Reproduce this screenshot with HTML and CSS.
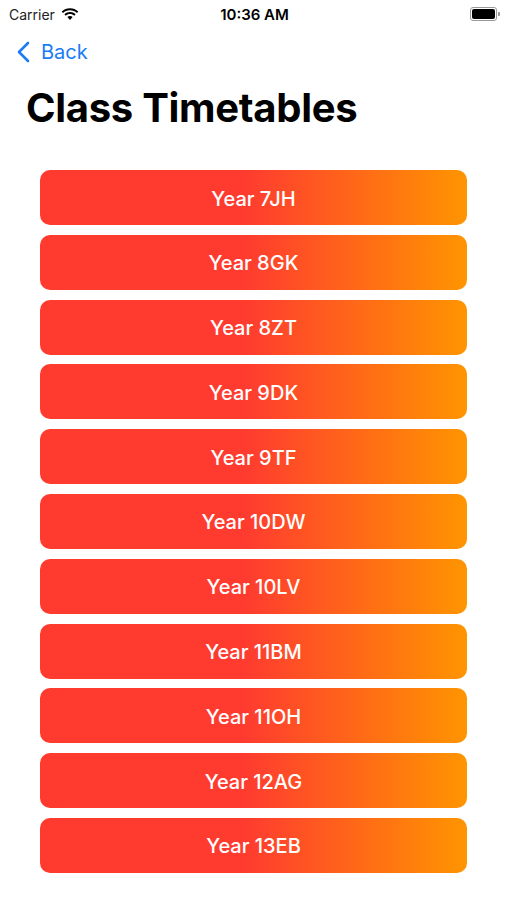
FILE: index.html
```html
<!DOCTYPE html>
<html lang="en">
<head>
    <meta charset="UTF-8">
    <meta name="viewport" content="width=device-width, initial-scale=1.0">
    <title>Class Timetables</title>
    <link rel="stylesheet" href="styles.css">
</head>
<body>
    <div class="status-bar">
        <div class="status-left">
            <span>Carrier</span>
            <svg class="wifi" viewBox="0 0 18 13" width="18" height="13">
                <path d="M9 2.2c2.7 0 5.1 1 7 2.7l1.3-1.4C15.1 1.4 12.2.2 9 .2S2.9 1.4.7 3.5L2 4.9c1.9-1.7 4.3-2.7 7-2.7z"/>
                <path d="M9 6.1c1.6 0 3.1.6 4.3 1.6l1.3-1.4C13.1 5 11.1 4.1 9 4.1S4.9 5 3.4 6.3l1.3 1.4C5.9 6.7 7.4 6.1 9 6.1z"/>
                <path d="M9 8.1c-1 0-1.9.4-2.6 1L9 12l2.6-2.9C10.9 8.5 10 8.1 9 8.1z"/>
            </svg>
        </div>
        <div class="status-time">10:36 AM</div>
        <div class="status-right">
            <div class="battery"><div class="battery-fill"></div></div>
            <div class="battery-cap"></div>
        </div>
    </div>

    <div class="nav-bar">
        <a class="back" href="#">
            <svg viewBox="0 0 13 22" width="13" height="22">
                <path d="M11 2L2 11l9 9" fill="none" stroke="currentColor" stroke-width="2.6" stroke-linecap="round" stroke-linejoin="round"/>
            </svg>
            <span>Back</span>
        </a>
    </div>

    <h1>Class Timetables</h1>

    <div class="class-list">
        <button class="class-btn">Year 7JH</button>
        <button class="class-btn">Year 8GK</button>
        <button class="class-btn">Year 8ZT</button>
        <button class="class-btn">Year 9DK</button>
        <button class="class-btn">Year 9TF</button>
        <button class="class-btn">Year 10DW</button>
        <button class="class-btn">Year 10LV</button>
        <button class="class-btn">Year 11BM</button>
        <button class="class-btn">Year 11OH</button>
        <button class="class-btn">Year 12AG</button>
        <button class="class-btn">Year 13EB</button>
    </div>
</body>
</html>
```

FILE: styles.css
```css
body {
    margin: 0;
    font-family: Inter, "Liberation Sans", sans-serif;
    background-color: #fff;
    color: #000;
}
.status-bar {
    height: 28px;
    display: flex;
    align-items: center;
    justify-content: space-between;
    padding: 0 7px 0 9px;
    font-size: 14px;
}
.status-left {
    display: flex;
    align-items: center;
    gap: 6px;
    width: 120px;
    color: #222;
}
.status-time {
    font-weight: 600;
    font-size: 15px;
}
.status-right {
    width: 120px;
    display: flex;
    justify-content: flex-end;
    align-items: center;
}
.battery {
    width: 23px;
    height: 10px;
    border: 1px solid #999;
    border-radius: 3px;
    padding: 1px;
}
.battery-fill {
    width: 100%;
    height: 100%;
    background-color: #000;
    border-radius: 2px;
}
.battery-cap {
    width: 2px;
    height: 4px;
    background-color: #999;
    border-radius: 0 1px 1px 0;
    margin-left: 1px;
}
.nav-bar {
    height: 48px;
    display: flex;
    align-items: center;
    padding-left: 17px;
}
.back {
    display: flex;
    align-items: center;
    gap: 11px;
    color: #1a7cf5;
    text-decoration: none;
    font-size: 20px;
}
h1 {
    margin: 8px 0 0 26px;
    font-size: 40px;
    font-weight: 700;
    letter-spacing: -0.3px;
    line-height: 48px;
}
.class-list {
    display: flex;
    flex-direction: column;
    gap: 9.8px;
    padding: 38px 40px 0 40px;
}
.class-btn {
    height: 55px;
    border: none;
    border-radius: 10px;
    background: linear-gradient(to right, #ff3b30 48%, #ff9500);
    color: #fff;
    font-family: inherit;
    font-size: 20px;
    font-weight: 500;
    padding-top: 3px;
    cursor: pointer;
}
```
